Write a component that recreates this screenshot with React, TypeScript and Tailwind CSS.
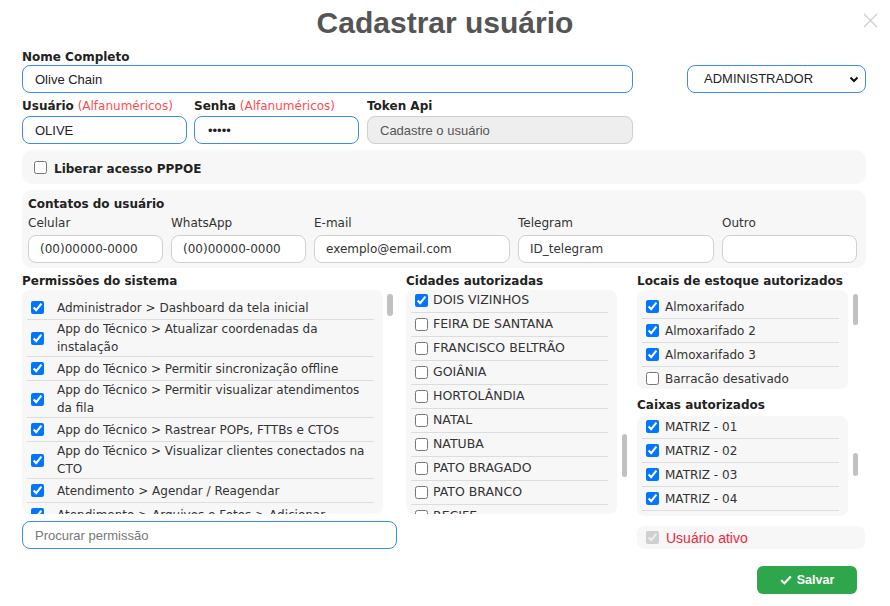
import React from 'react';

const permissoes: { label: string; checked: boolean }[] = [
  { label: 'Administrador > Dashboard da tela inicial', checked: true },
  { label: 'App do Técnico > Atualizar coordenadas da instalação', checked: true },
  { label: 'App do Técnico > Permitir sincronização offline', checked: true },
  { label: 'App do Técnico > Permitir visualizar atendimentos da fila', checked: true },
  { label: 'App do Técnico > Rastrear POPs, FTTBs e CTOs', checked: true },
  { label: 'App do Técnico > Visualizar clientes conectados na CTO', checked: true },
  { label: 'Atendimento > Agendar / Reagendar', checked: true },
  { label: 'Atendimento > Arquivos e Fotos > Adicionar', checked: true },
];

const cidades: { label: string; checked: boolean }[] = [
  { label: 'DOIS VIZINHOS', checked: true },
  { label: 'FEIRA DE SANTANA', checked: false },
  { label: 'FRANCISCO BELTRÃO', checked: false },
  { label: 'GOIÂNIA', checked: false },
  { label: 'HORTOLÂNDIA', checked: false },
  { label: 'NATAL', checked: false },
  { label: 'NATUBA', checked: false },
  { label: 'PATO BRAGADO', checked: false },
  { label: 'PATO BRANCO', checked: false },
  { label: 'RECIFE', checked: false },
];

const estoques = [
  { label: 'Almoxarifado', checked: true },
  { label: 'Almoxarifado 2', checked: true },
  { label: 'Almoxarifado 3', checked: true },
  { label: 'Barracão desativado', checked: false },
];

const caixas = [
  { label: 'MATRIZ - 01', checked: true },
  { label: 'MATRIZ - 02', checked: true },
  { label: 'MATRIZ - 03', checked: true },
  { label: 'MATRIZ - 04', checked: true },
  { label: 'MATRIZ - 05', checked: false },
];

const contatos = [
  { label: 'Celular', value: '(00)00000-0000', w: 'w-[135px]' },
  { label: 'WhatsApp', value: '(00)00000-0000', w: 'w-[135px]' },
  { label: 'E-mail', value: 'exemplo@email.com', w: 'w-[196px]' },
  { label: 'Telegram', value: 'ID_telegram', w: 'w-[196px]' },
  { label: 'Outro', value: '', w: 'w-[135px]' },
];

function Check({ checked, disabled }: { checked: boolean; disabled?: boolean }) {
  return (
    <input
      type="checkbox"
      defaultChecked={checked}
      disabled={disabled}
      className="w-[13px] h-[13px] shrink-0"
    />
  );
}

export default function App() {
  const arial = "font-['Liberation_Sans',Arial,sans-serif]";
  const blueInput = `h-[28px] rounded-[8px] border border-[#3d8bef] bg-white pl-[12px] text-[13px] text-[#222] outline-none ${arial}`;

  return (
    <div className="w-[890px] h-[606px] bg-white text-[#222] font-['DejaVu_Sans',sans-serif] text-[12px]">
      {/* cabeçalho */}
      <div className="relative pt-[6px]">
        <h1 className={`text-center text-[30px] leading-[34px] font-bold text-[#555] ${arial}`}>
          Cadastrar usuário
        </h1>
        <svg className="absolute right-[12px] top-[13px]" width="15" height="15" viewBox="0 0 15 15">
          <path d="M1 1 L14 14 M14 1 L1 14" stroke="#cfcfcf" strokeWidth="1.4" fill="none" />
        </svg>
      </div>

      <div className="pl-[22px] w-[866px]">
        {/* nome + perfil */}
        <div className="mt-[9px] flex items-end">
          <div className="w-[611px] flex flex-col">
            <label className="font-bold leading-[16px]">Nome Completo</label>
            <input className={`${blueInput} w-full`} defaultValue="Olive Chain" />
          </div>
          <div className={`ml-[54px] w-[179px] h-[28px] rounded-[8px] border border-[#3d8bef] flex items-center pl-[16px] pr-[6px] text-[13px] text-[#222] ${arial}`}>
            <span className="flex-1">ADMINISTRADOR</span>
            <svg width="10" height="7" viewBox="0 0 10 7">
              <path d="M1.5 1.5 L5 5 L8.5 1.5" stroke="#111" strokeWidth="2" fill="none" />
            </svg>
          </div>
        </div>

        {/* usuário / senha / token */}
        <div className="mt-[5px] flex">
          <div className="w-[165px] flex flex-col">
            <label className="leading-[16px] mb-[2px]">
              <b>Usuário</b> <span className="text-[#ff4d4f]">(Alfanuméricos)</span>
            </label>
            <input className={`${blueInput} w-full`} defaultValue="OLIVE" />
          </div>
          <div className="ml-[7px] w-[165px] flex flex-col">
            <label className="leading-[16px] mb-[2px]">
              <b>Senha</b> <span className="text-[#ff4d4f]">(Alfanuméricos)</span>
            </label>
            <input type="password" className={`${blueInput} w-full pl-[13px]`} defaultValue="12345" />
          </div>
          <div className="ml-[8px] w-[266px] flex flex-col">
            <label className="leading-[16px] mb-[2px] font-bold">Token Api</label>
            <input
              disabled
              className={`h-[28px] rounded-[8px] border border-[#cfcfcf] bg-[#eeeeee] pl-[12px] text-[13px] text-[#555] ${arial}`}
              defaultValue="Cadastre o usuário"
            />
          </div>
        </div>

        {/* pppoe */}
        <div className="mt-[6px] h-[34px] rounded-[10px] bg-[#f7f7f7] flex items-center pl-[12px]">
          <Check checked={false} />
          <span className="ml-[7px] pt-[4px] font-bold">Liberar acesso PPPOE</span>
        </div>

        {/* contatos */}
        <div className="mt-[6px] h-[78px] rounded-[10px] bg-[#f7f7f7] px-[6px] pt-[6px]">
          <div className="font-bold leading-[16px]">Contatos do usuário</div>
          <div className="mt-[3px] flex gap-[8px]">
            {contatos.map((c) => (
              <div key={c.label} className={`${c.w} flex flex-col`}>
                <label className="leading-[16px] text-[#333]">{c.label}</label>
                <input
                  className="mt-[4px] h-[28px] rounded-[8px] border border-[#d0d0d0] bg-white pl-[11px] text-[12px] text-[#333] outline-none"
                  defaultValue={c.value}
                />
              </div>
            ))}
          </div>
        </div>

        {/* listas */}
        <div className="mt-[5px] flex">
          {/* permissões */}
          <div className="w-[375px] flex flex-col">
            <div className="font-bold leading-[16px]">Permissões do sistema</div>
            <div className="mt-[1px] h-[224px] flex">
              <div className="w-[361px] rounded-[8px] bg-[#f7f7f7] overflow-hidden pt-[6px] pl-[5px] pr-[9px]">
                {permissoes.map((p) => (
                  <div key={p.label} className="min-h-[24px] flex items-center border-b border-[#dddddd]">
                    <span className="ml-[4px] flex"><Check checked={p.checked} /></span>
                    <span className="ml-[13px] leading-[18px] text-[#333]">{p.label}</span>
                  </div>
                ))}
              </div>
              <div className="flex-1">
                <div className="ml-[4px] mt-[4px] w-[6px] h-[22px] rounded-full bg-[#c1c1c1]" />
              </div>
            </div>
            <input
              className={`${blueInput} mt-[7px] w-full placeholder:text-[#777]`}
              placeholder="Procurar permissão"
            />
          </div>

          {/* cidades */}
          <div className="ml-[9px] w-[225px] flex flex-col">
            <div className="font-bold leading-[16px]">Cidades autorizadas</div>
            <div className="mt-[1px] h-[224px] flex">
              <div className="w-[211px] rounded-[8px] bg-[#f7f7f7] overflow-hidden pl-[5px] pr-[9px]">
                <div className="-mt-px">
                  {cidades.map((c) => (
                    <div key={c.label} className="h-[24px] flex items-center border-b border-[#dddddd]">
                      <span className="ml-[4px] flex"><Check checked={c.checked} /></span>
                      <span className="ml-[5px] text-[12.5px] text-[#333]">{c.label}</span>
                    </div>
                  ))}
                </div>
              </div>
              <div className="flex-1">
                <div className="ml-[5px] mt-[144px] w-[5px] h-[43px] rounded-full bg-[#c1c1c1]" />
              </div>
            </div>
          </div>

          {/* estoque / caixas */}
          <div className="ml-[6px] w-[229px] flex flex-col">
            <div className="font-bold leading-[16px]">Locais de estoque autorizados</div>
            <div className="mt-[1px] h-[99px] flex">
              <div className="w-[211px] rounded-[8px] bg-[#f7f7f7] overflow-hidden pt-[5px] pl-[5px] pr-[9px]">
                {estoques.map((e) => (
                  <div key={e.label} className="h-[24px] flex items-center border-b border-[#dddddd]">
                    <span className="ml-[4px] flex"><Check checked={e.checked} /></span>
                    <span className="ml-[6px] text-[#333]">{e.label}</span>
                  </div>
                ))}
              </div>
              <div className="flex-1">
                <div className="ml-[5px] mt-[4px] w-[5px] h-[31px] rounded-full bg-[#c1c1c1]" />
              </div>
            </div>

            <div className="mt-[8px] font-bold leading-[16px]">Caixas autorizados</div>
            <div className="mt-[3px] h-[100px] flex">
              <div className="w-[211px] rounded-[8px] bg-[#f7f7f7] overflow-hidden pl-[5px] pr-[9px]">
                <div className="-mt-px">
                  {caixas.map((c) => (
                    <div key={c.label} className="h-[24px] flex items-center border-b border-[#dddddd]">
                      <span className="ml-[4px] flex"><Check checked={c.checked} /></span>
                      <span className="ml-[6px] text-[#333]">{c.label}</span>
                    </div>
                  ))}
                </div>
              </div>
              <div className="flex-1">
                <div className="ml-[5px] mt-[37px] w-[5px] h-[23px] rounded-full bg-[#c1c1c1]" />
              </div>
            </div>

            <div className="mt-[10px] w-[228px] h-[23px] rounded-[8px] bg-[#f7f7f7] flex items-center pl-[9px]">
              <Check checked disabled />
              <span className={`ml-[7px] pt-[2px] text-[14px] text-[#f0283c] ${arial}`}>Usuário ativo</span>
            </div>

            <button
              className={`mt-[17px] self-end mr-[9px] w-[100px] h-[28px] rounded-[6px] bg-[#2ea64b] text-white font-bold text-[12.5px] flex items-center justify-center gap-[5px] ${arial}`}
            >
              <svg width="12" height="10" viewBox="0 0 12 10">
                <path d="M1.2 5.2 L4.4 8.3 L10.8 1.6" stroke="#fff" strokeWidth="2.2" fill="none" />
              </svg>
              Salvar
            </button>
          </div>
        </div>
      </div>
    </div>
  );
}
